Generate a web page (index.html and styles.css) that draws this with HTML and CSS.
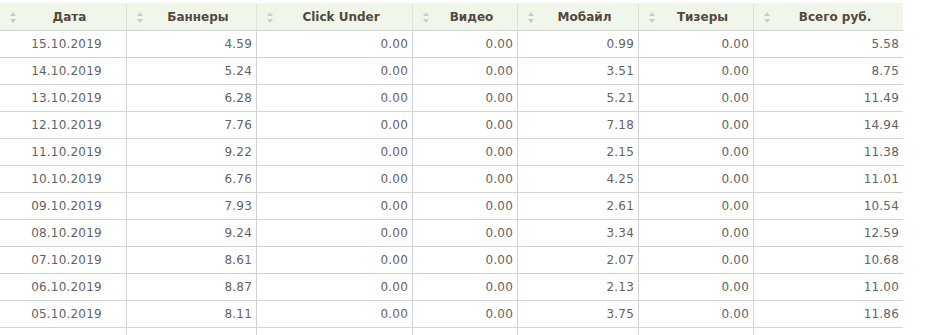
FILE: index.html
```html
<!DOCTYPE html>
<html lang="ru">
<head>
<meta charset="utf-8">
<title>Статистика</title>
<link rel="stylesheet" href="styles.css">
</head>
<body>
<div class="wrap">
  <div class="grid">
    <div class="th"><span class="sort"></span><span class="lbl">Дата</span></div>
    <div class="th"><span class="sort"></span><span class="lbl">Баннеры</span></div>
    <div class="th"><span class="sort"></span><span class="lbl">Click Under</span></div>
    <div class="th"><span class="sort"></span><span class="lbl">Видео</span></div>
    <div class="th"><span class="sort"></span><span class="lbl">Мобайл</span></div>
    <div class="th"><span class="sort"></span><span class="lbl">Тизеры</span></div>
    <div class="th"><span class="sort"></span><span class="lbl">Всего руб.</span></div>

    <div class="td date">15.10.2019</div><div class="td">4.59</div><div class="td">0.00</div><div class="td">0.00</div><div class="td">0.99</div><div class="td">0.00</div><div class="td">5.58</div>
    <div class="td date">14.10.2019</div><div class="td">5.24</div><div class="td">0.00</div><div class="td">0.00</div><div class="td">3.51</div><div class="td">0.00</div><div class="td">8.75</div>
    <div class="td date">13.10.2019</div><div class="td">6.28</div><div class="td">0.00</div><div class="td">0.00</div><div class="td">5.21</div><div class="td">0.00</div><div class="td">11.49</div>
    <div class="td date">12.10.2019</div><div class="td">7.76</div><div class="td">0.00</div><div class="td">0.00</div><div class="td">7.18</div><div class="td">0.00</div><div class="td">14.94</div>
    <div class="td date">11.10.2019</div><div class="td">9.22</div><div class="td">0.00</div><div class="td">0.00</div><div class="td">2.15</div><div class="td">0.00</div><div class="td">11.38</div>
    <div class="td date">10.10.2019</div><div class="td">6.76</div><div class="td">0.00</div><div class="td">0.00</div><div class="td">4.25</div><div class="td">0.00</div><div class="td">11.01</div>
    <div class="td date">09.10.2019</div><div class="td">7.93</div><div class="td">0.00</div><div class="td">0.00</div><div class="td">2.61</div><div class="td">0.00</div><div class="td">10.54</div>
    <div class="td date">08.10.2019</div><div class="td">9.24</div><div class="td">0.00</div><div class="td">0.00</div><div class="td">3.34</div><div class="td">0.00</div><div class="td">12.59</div>
    <div class="td date">07.10.2019</div><div class="td">8.61</div><div class="td">0.00</div><div class="td">0.00</div><div class="td">2.07</div><div class="td">0.00</div><div class="td">10.68</div>
    <div class="td date">06.10.2019</div><div class="td">8.87</div><div class="td">0.00</div><div class="td">0.00</div><div class="td">2.13</div><div class="td">0.00</div><div class="td">11.00</div>
    <div class="td date">05.10.2019</div><div class="td">8.11</div><div class="td">0.00</div><div class="td">0.00</div><div class="td">3.75</div><div class="td">0.00</div><div class="td">11.86</div>
    <div class="td date"></div><div class="td"></div><div class="td"></div><div class="td"></div><div class="td"></div><div class="td"></div><div class="td"></div>
  </div>
</div>
</body>
</html>
```
FILE: styles.css
```css
html, body {
  margin: 0;
  padding: 0;
  background: #ffffff;
}
.wrap {
  padding-top: 3px;
  width: 903px;
  font-family: "DejaVu Sans", Verdana, sans-serif;
}
.grid {
  display: grid;
  grid-template-columns: 126px 130px 156px 105px 121px 115px 150px;
}
.th, .td {
  box-sizing: border-box;
  border-bottom: 1px solid #d3d3d3;
  border-left: 1px solid #d3d3d3;
}
.th:nth-child(7n+1), .td:nth-child(7n+1) {
  border-left: none;
}
.th {
  height: 28px;
  background: #f1f6ea;
  border-left-color: #dfe3da;
  border-bottom-color: #d3d3d3;
  color: #554840;
  font-weight: bold;
  font-size: 12px;
  display: flex;
  align-items: center;
  padding-left: 10px;
  padding-right: 4px;
}
.lbl {
  flex: 1;
  text-align: center;
  padding-top: 1px;
}
.sort {
  width: 7px;
  height: 12px;
  position: relative;
  flex: none;
  margin-top: 2px;
}
.sort::before, .sort::after {
  content: "";
  position: absolute;
  left: 0;
  border-left: 3.5px solid transparent;
  border-right: 3.5px solid transparent;
}
.sort::before {
  top: 0;
  border-bottom: 4px solid #cbcbcb;
}
.sort::after {
  bottom: 1px;
  border-top: 4px solid #cbcbcb;
}
.td {
  height: 27px;
  font-size: 12px;
  letter-spacing: 0.2px;
  color: #636363;
  text-align: right;
  padding-right: 4px;
  line-height: 27px;
}
.td.date {
  text-align: center;
  padding-right: 0;
  padding-left: 7px;
}
```
